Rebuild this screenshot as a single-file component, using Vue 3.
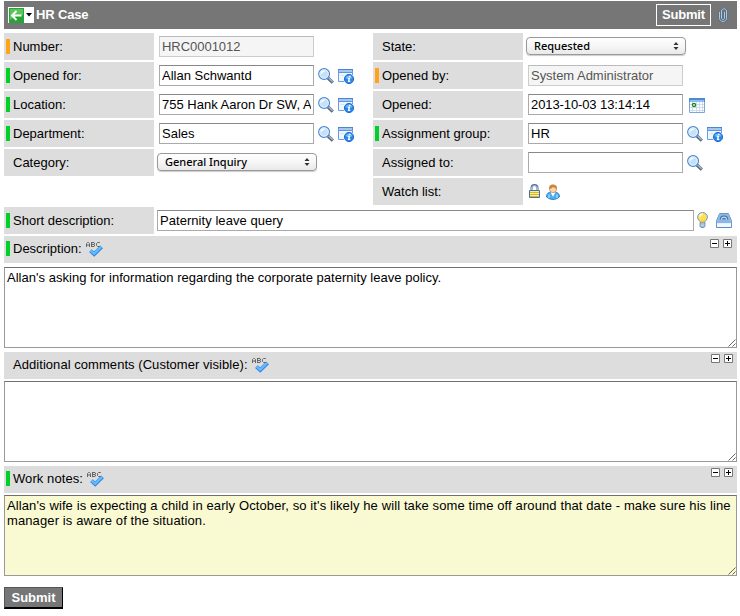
<script setup>
import { ref, h } from 'vue'

const left = ref([
  { label: 'Number:', mark: 'orange', type: 'input', value: 'HRC0001012', readonly: true, icons: [] },
  { label: 'Opened for:', mark: 'green', type: 'input', value: 'Allan Schwantd', icons: ['search', 'info'] },
  { label: 'Location:', mark: 'green', type: 'input', value: '755 Hank Aaron Dr SW, Atlanta', icons: ['search', 'info'] },
  { label: 'Department:', mark: 'green', type: 'input', value: 'Sales', icons: ['search', 'info'] },
  { label: 'Category:', type: 'select', value: 'General Inquiry', icons: [] }
])
const right = ref([
  { label: 'State:', type: 'select', value: 'Requested', icons: [] },
  { label: 'Opened by:', mark: 'orange', type: 'input', value: 'System Administrator', readonly: true, icons: [] },
  { label: 'Opened:', type: 'input', value: '2013-10-03 13:14:14', cls: 'loose', icons: ['calendar'] },
  { label: 'Assignment group:', mark: 'green', type: 'input', value: 'HR', icons: ['search', 'info'] },
  { label: 'Assigned to:', type: 'input', value: '', icons: ['search'] },
  { label: 'Watch list:', type: 'watch', icons: [] }
])
const notes = ref([
  { label: 'Description:', mark: 'green', cls: 'first', value: "Allan's asking for information regarding the corporate paternity leave policy." },
  { label: 'Additional comments (Customer visible):', cls: 'comments', value: '' },
  { label: 'Work notes:', mark: 'green', cls: 'work', value: "Allan's wife is expecting a child in early October, so it's likely he will take some time off around that date - make sure his line manager is aware of the situation." }
])
const shortDescription = ref('Paternity leave query')

const p = (d, fill, stroke, w = 1) => h('path', { d, fill: fill || 'none', stroke: stroke || 'none', 'stroke-width': w })
const c = (cx, cy, r, fill, stroke, w = 1) => h('circle', { cx, cy, r, fill, stroke: stroke || 'none', 'stroke-width': w })

const shapes = {
  search: () => [
    p('M10 10 14.8 14.6', '', '#56697c', 3.2),
    p('M10.6 10 14.6 13.8', '', '#a9bccf', 1.3),
    c(6.1, 6, 5.4, '#c4e1fa', '#4a86cc', 1.2),
    c(6.1, 6, 4.2, 'none', '#e6f4ff', 0.9),
    p('M3.2 5.6C3.6 3.9 4.8 3.1 6.6 3.1', '', '#fff', 1.2)
  ],
  info: () => [
    p('M.5 1V12.5H6M14.5 1V6', '', '#6c9ce0'),
    p('M1 3H14V7H6V12H1Z', '#f0f6fe'),
    p('M0 0H15V1.5H0Z', '#4a84d8'),
    p('M1 1.5H14V3H1Z', '#a6c9f4'),
    p('M1 3H14V4H1Z', '#5f95df'),
    p('M2.5 6.5H6', '', '#d3e3f7'),
    c(11, 10, 4.6, '#2b88ea', '#1f6cca'),
    p('M7.4 9A3.8 3.8 0 0 1 14.6 9Q11 10.8 7.4 9Z', '#6cb9f8'),
    p('M11 6.8H12.5V8.1H11ZM9.8 8.8H12.2L11.5 11.8H12.3V12.9H9.8L10.5 9.8H9.8Z', '#fff')
  ],
  calendar: () => [
    p('M.5 .5H15.5V14.5H.5Z', '#fff', '#7ba6dc'),
    p('M0 0H16V4H0Z', '#4f8ad6'),
    p('M1 2H15V4H1Z', '#91bdf0'),
    p('M3.5 4V14M7.5 4V14M10.5 4V14M13.5 4V14M1 6.5H15M1 9.5H15M1 12.5H15', '', '#cbdcf1'),
    c(5, 7, 1.6, '#e2f5d8', '#168a17', 1.3)
  ],
  bulb: () => [
    p('M3.5 11.2C3.5 9 .6 8 .6 5.2A4.9 4.7 0 0 1 10.4 5.2C10.4 8 7.5 9 7.5 11.2Z', '#ffe05a', '#5c8dcc', 0.9),
    p('M2 5.8A3.6 3.6 0 0 0 9 5.8Q8 9 6.8 10.4H4.4Q3.6 8.6 2 5.8Z', '#f9c836'),
    p('M2.8 4.8C2.8 3.2 4 2.2 5.6 2.2', '', '#fffbd8', 1.8),
    p('M3 11H8V14.3L6.6 15.7H4.4L3 14.3Z', '#8ba9cf', '#4774ad', 0.7),
    p('M3.4 12H7.6M3.4 13.8H7.6', '', '#e8f2ff', 0.8)
  ],
  drawer: () => [
    p('M3.6 .6H12.4L15.4 7.6V14.4H.6V7.6Z', '#b7d4f4', '#5f8fc6'),
    p('M3.6 1H12.4L15 8H1Z', '#8fb9e2'),
    p('M4.4 6.5C4.4 1.8 11.6 1.8 11.6 6.5', '#c7e0f6', '#3e6ea9', 1.2),
    p('M6 6.5C6.2 4 9.8 4 10 6.5Z', '#4678b2'),
    p('M.6 7.8H15.4V10H.6Z', '#8bb7e8'),
    p('M1 10.2H15V14H1Z', '#f2f8ff'),
    p('M.5 14.5H15.5', '', '#588bc6')
  ],
  lock: () => [
    p('M2.5 7V4C2.5 .1 8.5 .1 8.5 4V7', '', '#4a6ea8', 2),
    p('M2.6 6.5V4C2.6 .9 8.4 .9 8.4 4V6.5', '', '#cfdcec', 0.8),
    p('M.5 6.5H10.5V13.5H.5Z', '#fdf08a', '#4a6ea8'),
    p('M1 8.5H10M1 10.5H10M1 12.5H10', '', '#dcb630')
  ],
  person: () => [
    p('M.5 13C.4 9.5 2.6 8.3 5 8H8.4C11.4 8.3 13.6 9.5 13.4 13Q7 18 .5 13Z', '#4fadee', '#2f82cc'),
    p('M4.5 8.2H9.5L7 12.8Z', '#fff'),
    p('M3 10.5V14M11 10.5V14', '', '#a0dcff', 1.3),
    c(7, 5, 3.5, '#ffd9ad', '#cc8a4a', 0.8),
    p('M3.1 4.8C2.7 1.6 5 .3 7 .4C9.8 .5 11.6 2.4 10.8 4.8C9.2 4.5 7.9 3.9 7.2 3C6 4.3 4.6 4.8 3.1 4.8Z', '#c98643')
  ],
  check: () => [
    p('M4.4 8.7 8.2 12.2 15.6 4.8', '', '#3585df', 3.8),
    p('M4.6 8.6 8.2 11.8 15.1 4.9', '', '#62bdff', 2.2),
    p('M.5 5V1.5L1.5 .5H2.5L3.5 1.5V5M1 3H3', '', '#666', 1),
    p('M5.5 0V5M5 .5H8L8.5 1V2L8 2.5H6M8 2.5 8.5 3V4L8 4.5H5', '', '#666', 1),
    p('M13.8 .5H11.5L10.5 1.5V3.5L11.5 4.5H13.8', '', '#666', 1)
  ],
  clip: () => [
    p('M1.5 4V10.5C1.5 14.4 8.5 14.4 8.5 10.5V3C8.5 .1 3.5 .1 3.5 3V10C3.5 12.2 6.5 12.2 6.5 10V4', '', '#42688a', 1.6),
    p('M1.5 4V10.5C1.5 14.4 8.5 14.4 8.5 10.5V3C8.5 .1 3.5 .1 3.5 3V10C3.5 12.2 6.5 12.2 6.5 10V4', '', '#b4d6ee', 0.9)
  ],
  back: () => [
    p('M0 0H15V15H0Z', '#27a534'),
    p('M1 1H14V7Q7 7 1 12Z', '#5bc55b'),
    p('M3 7.5H12.5M7.5 3 3 7.5 7.5 12', '', '#fff', 1.9)
  ]
}
const sizes = {
  search: [16, 16], info: [16, 15], calendar: [16, 15], bulb: [11, 16], drawer: [16, 15],
  lock: [11, 14], person: [14, 16], check: [17, 15], clip: [10, 14], back: [15, 15]
}
const Icon = ({ name }) => {
  const [w, ht] = sizes[name]
  return h('svg', { width: w, height: ht, viewBox: `0 0 ${w} ${ht}` }, shapes[name]())
}
Icon.props = ['name']
</script>

<template>
  <main class="form">
    <header class="bar">
      <span class="nav"><Icon name="back" /><svg class="caret" width="6" height="4"><path d="M0 0H6L3 3.5Z" /></svg></span>
      <h1>HR Case</h1>
      <button class="submit-top">Submit</button>
      <Icon name="clip" class="clip" />
    </header>

    <div class="columns">
      <section v-for="(col, i) in [left, right]" :key="i" class="column">
        <div v-for="f in col" :key="f.label" class="row">
          <label class="label"><i class="mark" :class="f.mark"></i><span>{{ f.label }}</span></label>
          <div v-if="f.type === 'select'" class="select">
            <span>{{ f.value }}</span>
            <svg width="6" height="8" viewBox="0 0 6 8"><path d="M.5 3 3 0 5.5 3ZM.5 5 3 8 5.5 5Z" fill="#333" /></svg>
          </div>
          <div v-else-if="f.type === 'watch'" class="watch"><Icon name="lock" /><Icon name="person" class="person" /></div>
          <input v-else v-model="f.value" class="input" :class="[f.cls, { readonly: f.readonly }]" :readonly="f.readonly" />
          <Icon v-for="n in f.icons" :key="n" :name="n" :class="'i-' + n" />
        </div>
      </section>
    </div>

    <div class="row short">
      <label class="label"><i class="mark green"></i><span>Short description:</span></label>
      <input v-model="shortDescription" class="input wide" />
      <Icon name="bulb" class="i-bulb" />
      <Icon name="drawer" class="i-drawer" />
    </div>

    <section v-for="n in notes" :key="n.label" class="note" :class="n.cls">
      <div class="head">
        <i class="mark" :class="n.mark"></i><span class="title">{{ n.label }}</span><Icon name="check" class="check" />
        <div class="sizers">
          <svg width="9" height="9"><path d="M.5 .5H8.5V8.5H.5Z" fill="#fff" stroke="#777" /><path d="M2 4.5H7" stroke="#000" /></svg>
          <svg width="9" height="9"><path d="M.5 .5H8.5V8.5H.5Z" fill="#fff" stroke="#777" /><path d="M2 4.5H7M4.5 2V7" stroke="#000" /></svg>
        </div>
      </div>
      <div class="area">
        <textarea v-model="n.value" spellcheck="false"></textarea>
        <svg class="grip" width="8" height="8"><path d="M.5 7.5 7.5 .5M4.5 7.5 7.5 4.5" stroke="#555" stroke-width=".9" /></svg>
      </div>
    </section>

    <button class="submit-bottom">Submit</button>
  </main>
</template>

<style>
body { background: #fff; }
</style>

<style scoped>
* { box-sizing: border-box; }
svg { display: block; flex: none; }
.form { width: 733px; margin-left: 4px; padding-top: 1px; font: 13px/15px "Liberation Sans", Arial, sans-serif; color: #000; }
button, input, textarea { font: inherit; color: inherit; margin: 0; border-radius: 0; outline: none; appearance: none; }

.bar { display: flex; align-items: center; height: 28px; background: #767676; color: #fff; padding: 0 9px 0 4px; }
.nav { display: flex; align-items: center; width: 26px; height: 16px; background: #fff; padding-left: 1px; }
.caret { margin-left: 2px; }
h1 { font-size: 13px; line-height: 15px; margin: 0 auto 0 2px; font-weight: bold; letter-spacing: -.15px; position: relative; top: -1px; }
.submit-top { width: 55px; height: 22px; padding: 0 0 1px; border: 1px solid #fff; background: #767676; color: #fff; font-weight: bold; letter-spacing: -.2px; }
.clip { margin-left: 7px; }

.columns { display: flex; gap: 219px; padding-top: 4px; }
.column { display: flex; flex-direction: column; gap: 2px; width: 150px; }
.row { display: flex; height: 27px; align-items: flex-start; }
.label { display: flex; flex: none; align-items: flex-start; width: 150px; height: 27px; padding: 6px 0 0 2px; background: #ddd; white-space: nowrap; }
.mark { width: 4px; height: 15px; margin-right: 3px; flex: none; }
.orange { background: #ffa31a; }
.green { background: #00d128; }
.input { flex: none; width: 155px; height: 21px; margin: 3px 0 0 5px; padding: 0 2px; border: 1px solid #aaa; border-top-color: #888; background: #fff; line-height: 17px; padding-bottom: 1px; }
.readonly { background: #f5f5f5; border-color: #ccc; border-top-color: #bbb; color: #555; }
.readonly { letter-spacing: -.03px; }
.loose { letter-spacing: -.1px; }
.select { display: flex; flex: none; align-items: center; justify-content: space-between; width: 160px; height: 18px; margin: 4px 0 0 3px; padding: 0 6px 0 7px; border: 1px solid #999; border-radius: 4px; background: linear-gradient(#fff, #f6f6f6 50%, #e9e9e9); box-shadow: 0 1px 1px #ccc; font: 500 11px/14px "Noto Sans", sans-serif; }
.watch { display: flex; padding: 6px 0 0 6px; }
.person { margin-left: 6px; }
.i-search { margin: 6px 0 0 4px; }
.i-info { margin: 7px 0 0 4px; }
.i-calendar { margin: 7px 0 0 6px; }

.short { margin-top: 2px; }
.wide { width: 537px; margin-left: 3px; letter-spacing: .05px; }
.i-bulb { margin: 5px 0 0 3px; }
.i-drawer { margin: 6px 0 0 8px; }

.note { margin-top: 4px; }
.first { margin-top: 2px; }
.head { display: flex; align-items: flex-start; height: 27px; padding: 5px 4px 0 2px; background: #ddd; }
.check { margin: 1px 0 0 4px; }
.comments .title { letter-spacing: .05px; }
.work .title { letter-spacing: .08px; }
.sizers { display: flex; gap: 4px; margin: -3px 0 0 auto; }
.first .sizers { margin-top: -2px; margin-right: 1px; }
.area { position: relative; margin-top: 2px; height: 81px; }
.first .area { margin-top: 4px; }
textarea { display: block; width: 733px; height: 81px; padding: 2px; border: 1px solid #999; border-top-color: #707070; background: #fff; resize: none; overflow: hidden; letter-spacing: .026px; }
.work textarea { background: #f9f9d2; letter-spacing: .11px; }
.grip { position: absolute; right: 1px; bottom: 1px; }
.submit-bottom { display: block; width: 59px; height: 22px; margin-top: 11px; padding: 0; border: 1px solid #555; border-right-color: #000; border-bottom: 2px solid #000; background: #767676; color: #fff; font-weight: bold; }
</style>
